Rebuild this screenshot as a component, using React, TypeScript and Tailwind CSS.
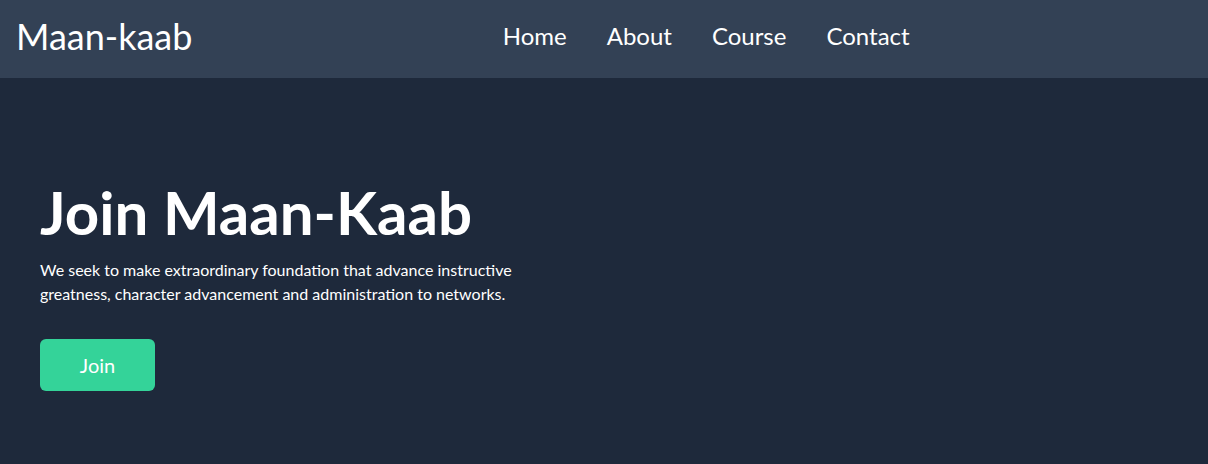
const links = ["Home", "About", "Course", "Contact"];

export default function App() {
  return (
    <div className="min-h-screen bg-[#1e293b] text-white font-['Lato',sans-serif]">
      {/* Header */}
      <header className="h-[78px] bg-[#334155] flex items-center px-4 pb-1.5">
        <h1 className="text-4xl font-normal">Maan-kaab</h1>
        <nav className="flex-1 flex justify-center gap-10 pl-7 text-2xl">
          {links.map((l) => (
            <a key={l} href="#" className="hover:text-emerald-400">
              {l}
            </a>
          ))}
        </nav>
      </header>

      {/* Hero */}
      <section className="h-[385px] px-10 pt-[104px]">
        <h2 className="text-6xl font-bold">Join Maan-Kaab</h2>
        <p className="mt-4 w-[480px] text-base leading-6">
          We seek to make extraordinary foundation that advance instructive greatness, character
          advancement and administration to networks.
        </p>
        <button className="mt-[33px] w-[115px] h-[52px] rounded-md bg-[#34d399] text-xl">Join</button>
      </section>
    </div>
  );
}
